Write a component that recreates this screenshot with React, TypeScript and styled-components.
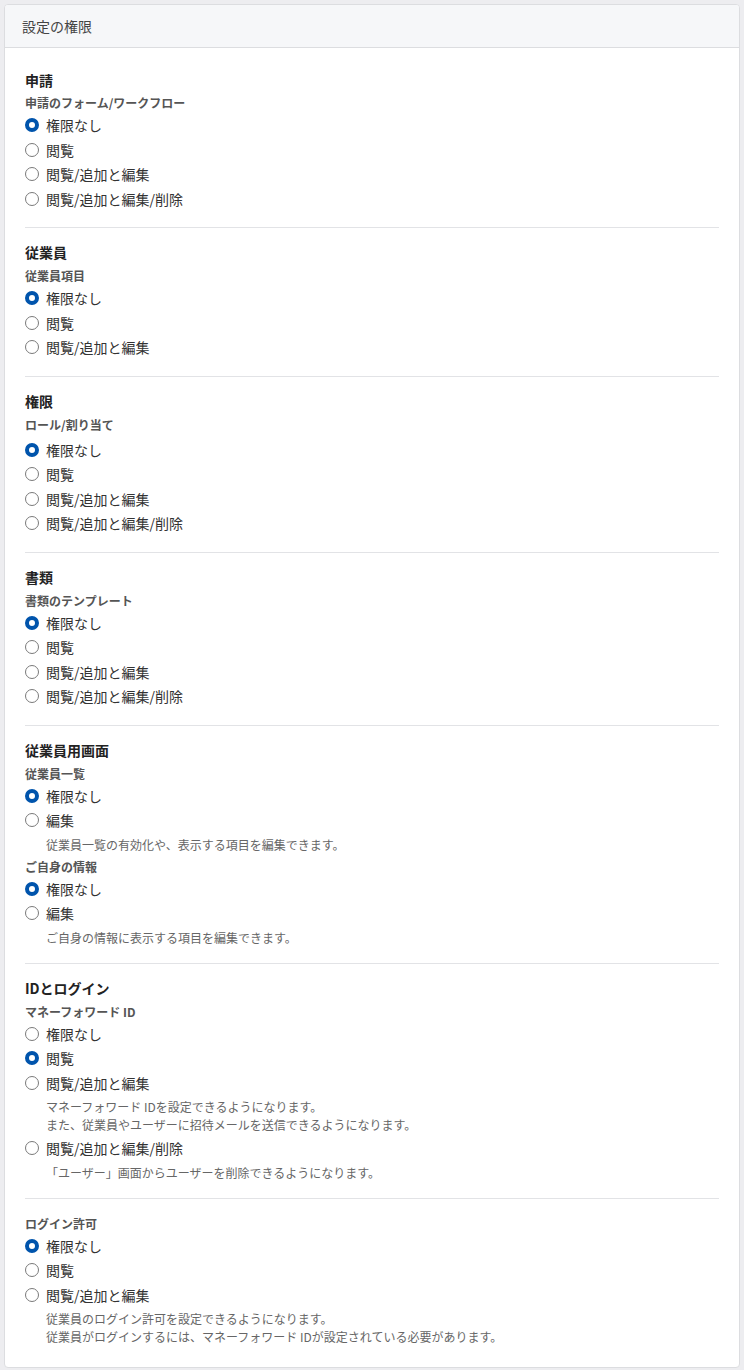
import React from 'react';
import styled, { createGlobalStyle } from 'styled-components';

const GlobalStyle = createGlobalStyle`
  html, body {
    margin: 0;
    padding: 0;
    background: #ededf0;
  }
  body {
    font-family: "Noto Sans CJK JP", "Noto Sans", sans-serif;
    color: #333;
    -webkit-font-smoothing: antialiased;
  }
`;

type Option = { label: string; note?: string[] };
type Group = { name: string; options: Option[]; selected: number; loose?: boolean };
type Section = { title?: string; groups: Group[] };

const basic = ['権限なし', '閲覧', '閲覧/追加と編集', '閲覧/追加と編集/削除'];
const opts = (n: number): Option[] => basic.slice(0, n).map((label) => ({ label }));

const sections: Section[] = [
  { title: '申請', groups: [{ name: '申請のフォーム/ワークフロー', options: opts(4), selected: 0 }] },
  { title: '従業員', groups: [{ name: '従業員項目', options: opts(3), selected: 0 }] },
  { title: '権限', groups: [{ name: 'ロール/割り当て', options: opts(4), selected: 0, loose: true }] },
  { title: '書類', groups: [{ name: '書類のテンプレート', options: opts(4), selected: 0 }] },
  {
    title: '従業員用画面',
    groups: [
      {
        name: '従業員一覧',
        selected: 0,
        options: [
          { label: '権限なし' },
          { label: '編集', note: ['従業員一覧の有効化や、表示する項目を編集できます。'] },
        ],
      },
      {
        name: 'ご自身の情報',
        selected: 0,
        options: [
          { label: '権限なし' },
          { label: '編集', note: ['ご自身の情報に表示する項目を編集できます。'] },
        ],
      },
    ],
  },
  {
    title: 'IDとログイン',
    groups: [
      {
        name: 'マネーフォワード ID',
        selected: 1,
        options: [
          { label: '権限なし' },
          { label: '閲覧' },
          {
            label: '閲覧/追加と編集',
            note: [
              'マネーフォワード IDを設定できるようになります。',
              'また、従業員やユーザーに招待メールを送信できるようになります。',
            ],
          },
          {
            label: '閲覧/追加と編集/削除',
            note: ['「ユーザー」画面からユーザーを削除できるようになります。'],
          },
        ],
      },
    ],
  },
  {
    groups: [
      {
        name: 'ログイン許可',
        selected: 0,
        options: [
          { label: '権限なし' },
          { label: '閲覧' },
          {
            label: '閲覧/追加と編集',
            note: [
              '従業員のログイン許可を設定できるようになります。',
              '従業員がログインするには、マネーフォワード IDが設定されている必要があります。',
            ],
          },
        ],
      },
    ],
  },
];

const Page = styled.div`
  padding: 4px;
`;

const Card = styled.div`
  background: #fff;
  border: 1px solid #dcdde0;
  border-radius: 4px;
  overflow: hidden;
`;

const CardHeader = styled.div`
  height: 42px;
  display: flex;
  align-items: center;
  padding: 0 17px;
  background: #f6f7f9;
  border-bottom: 1px solid #dcdde0;
  font-size: 14px;
  color: #444;
`;

const CardBody = styled.div`
  padding: 22px 20px 21px;
`;

const Title = styled.h3`
  margin: 0 0 4px;
  font-size: 14px;
  line-height: 20px;
  font-weight: 700;
  color: #222;
`;

const Block = styled.section`
  padding: 16px 0;
  border-bottom: 1px solid #e2e3e6;

  &:first-child {
    padding-top: 0;
  }
  &:last-child {
    padding-bottom: 0;
    border-bottom: none;
  }
  &:not(:first-child) ${Title} {
    margin-top: -2px;
    margin-bottom: 5px;
  }
`;

const GroupName = styled.div<{ $first: boolean; $loose?: boolean }>`
  margin-top: ${(p) => (p.$first ? '0' : '4px')};
  margin-bottom: ${(p) => (p.$loose ? '4px' : '1px')};
  font-size: 12px;
  line-height: 18px;
  font-weight: 700;
  color: #555;
`;

const Row = styled.label`
  display: flex;
  align-items: center;
  gap: 7px;
  height: 24.5px;
  font-size: 14px;
  color: #333;
`;

const Radio = styled.span<{ $on: boolean }>`
  flex: none;
  width: 14px;
  height: 14px;
  box-sizing: border-box;
  border-radius: 50%;
  border: ${(p) => (p.$on ? '4.5px solid #0054ac' : '1px solid #7a7a7a')};
  background: #fff;
`;

const Note = styled.div`
  padding: 3px 0 2px 21px;
  font-size: 12px;
  line-height: 18px;
  color: #666;

  &:last-child {
    padding-bottom: 0;
  }
`;

export default function App() {
  return (
    <Page>
      <GlobalStyle />
      <Card>
        <CardHeader>設定の権限</CardHeader>
        <CardBody>
          {sections.map((s, si) => (
            <Block key={si}>
              {s.title && <Title>{s.title}</Title>}
              {s.groups.map((g, gi) => (
                <div key={gi}>
                  <GroupName $first={gi === 0} $loose={g.loose}>
                    {g.name}
                  </GroupName>
                  {g.options.map((o, oi) => (
                    <React.Fragment key={oi}>
                      <Row>
                        <Radio $on={oi === g.selected} />
                        {o.label}
                      </Row>
                      {o.note && (
                        <Note>
                          {o.note.map((line, li) => (
                            <div key={li}>{line}</div>
                          ))}
                        </Note>
                      )}
                    </React.Fragment>
                  ))}
                </div>
              ))}
            </Block>
          ))}
        </CardBody>
      </Card>
    </Page>
  );
}
